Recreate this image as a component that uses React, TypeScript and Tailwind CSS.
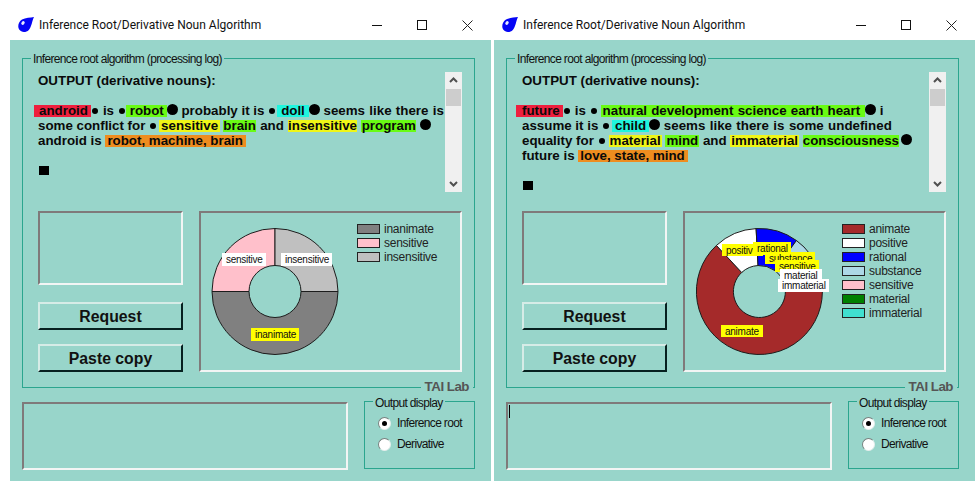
import type { ReactNode } from 'react'

const CLIENT = 'bg-[#98d5ca]'
const sunken = 'border-2 border-t-[#7f7a7a] border-l-[#7f7a7a] border-b-[#f2f5f4] border-r-[#f2f5f4]'

interface Slice {
  from: number
  to: number
  color: string
}

interface ChartLabel {
  text: string
  x: number
  y: number
  w: number
  h: number
  bg: string
}

interface LegendItem {
  name: string
  color: string
}

function point(cx: number, cy: number, r: number, deg: number) {
  const rad = ((deg - 90) * Math.PI) / 180
  return `${(cx + r * Math.cos(rad)).toFixed(2)} ${(cy + r * Math.sin(rad)).toFixed(2)}`
}

function slicePath(cx: number, cy: number, s: Slice) {
  const large = s.to - s.from > 180 ? 1 : 0
  return [
    `M${point(cx, cy, 63, s.from)}`,
    `A63 63 0 ${large} 1 ${point(cx, cy, 63, s.to)}`,
    `L${point(cx, cy, 26, s.to)}`,
    `A26 26 0 ${large} 0 ${point(cx, cy, 26, s.from)}`,
    'Z',
  ].join(' ')
}

function Donut({ cx, slices, labels }: { cx: number; slices: Slice[]; labels: ChartLabel[] }) {
  const cy = 75.5
  return (
    <svg width="150" height="150" className="mt-[3px] ml-[4px] shrink-0">
      {slices.map((s) => (
        <path key={s.from} d={slicePath(cx, cy, s)} fill={s.color} stroke="#1c1c1c" strokeWidth="1" />
      ))}
      {labels.map((l) => (
        <g key={l.text}>
          <rect x={l.x} y={l.y} width={l.w} height={l.h} fill={l.bg} />
          <text
            x={l.x + 4}
            y={l.y + 10}
            fontSize="10"
            letterSpacing="-0.25"
            fontFamily="Liberation Sans, Arial, sans-serif"
            fill="#111"
          >
            {l.text}
          </text>
        </g>
      ))}
    </svg>
  )
}

function Hl({ color, className, children }: { color: string; className?: string; children: ReactNode }) {
  return (
    <span className={`inline-block h-[12px] leading-[12px] ${color} ${className ?? ''}`}>{children}</span>
  )
}

function Dot({ className }: { className?: string }) {
  return <span className={`inline-block w-[6px] h-[6px] rounded-full bg-black align-[1px] ${className ?? ''}`} />
}

const BigDot = () => <span className="inline-block w-[11px] h-[11px] rounded-full bg-black align-[0px]" />
const Square = () => <span className="inline-block w-[10px] h-[9px] bg-black ml-[1px] align-[0px]" />

const RED = 'bg-[#ee1f3e]'
const GREEN = 'bg-[#69fb14]'
const CYAN = 'bg-[#1ff5de]'
const YELLOW = 'bg-[#eff617]'
const ORANGE = 'bg-[#ee8d1f]'

function Line({ children }: { children?: ReactNode }) {
  return <div className="h-[15px] leading-[15px] pl-[4px] whitespace-pre">{children}</div>
}

function AndroidLog() {
  return (
    <>
      <Line>OUTPUT (derivative nouns):</Line>
      <Line />
      <div className="h-[15px] leading-[15px] whitespace-pre">
        <Hl color={RED} className="pl-[5px] pr-[3px]">android</Hl>
        <Dot className="ml-[1px] mr-[5px]" />is <Dot className="ml-[1px] mr-[1px]" />
        <Hl color={GREEN} className="pl-[4px] pr-[3px]">robot</Hl>
        <BigDot /> probably it is <Dot className="ml-[1px] mr-[2px]" />
        <Hl color={CYAN} className="px-[4px]">doll</Hl>
        <BigDot /> <span className="[word-spacing:0.6px]">seems like there is</span>
      </div>
      <Line>
        some conflict for <Dot className="ml-[1px] mr-[3px]" />
        <Hl color={YELLOW} className="px-[2px] -mr-[1px]">sensitive</Hl>{' '}
        <Hl color={GREEN} className="px-[0.5px]">brain</Hl> and{' '}
        <Hl color={YELLOW} className="px-[0.5px]">insensitive</Hl>{' '}
        <Hl color={GREEN} className="px-[0.5px]">program</Hl> <BigDot />
      </Line>
      <Line>
        android is <Hl color={ORANGE} className="pl-[2px] pr-[3px]">robot, machine, brain</Hl>
      </Line>
      <Line />
      <Line>
        <Square />
      </Line>
    </>
  )
}

function FutureLog() {
  return (
    <>
      <Line>OUTPUT (derivative nouns):</Line>
      <Line />
      <div className="h-[15px] leading-[15px] whitespace-pre -ml-[2px]">
        <Hl color={RED} className="pl-[6px] pr-[3px]">future</Hl>
        <Dot className="ml-[1px] mr-[5px]" />is <Dot className="ml-[1px] mr-[4px]" />
        <Hl color={GREEN} className="pl-[2px] pr-[5px] [word-spacing:0.5px]">natural development science earth heart</Hl>
        <BigDot /> i
      </div>
      <Line>
        assume it is <Dot className="ml-[1px] mr-[3px]" />
        <Hl color={CYAN} className="px-[3px]">child</Hl>
        <BigDot /> <span className="[word-spacing:0.7px]">seems like there is some undefined</span>
      </Line>
      <Line>
        equality for <Dot className="ml-[1px] mr-[4px]" />
        <Hl color={YELLOW} className="px-[1px]">material</Hl>{' '}
        <Hl color={GREEN} className="px-[1px]">mind</Hl> and{' '}
        <Hl color={YELLOW} className="px-[1px]">immaterial</Hl>{' '}
        <Hl color={GREEN} className="-mr-[2px]">consciousness</Hl> <BigDot />
      </Line>
      <Line>
        future is <Hl color={ORANGE} className="pl-[2px]">love, state, mind </Hl>
      </Line>
      <Line />
      <Line>
        <Square />
      </Line>
    </>
  )
}

function Scrollbar() {
  return (
    <div className="w-[17px] h-[120px] bg-[#f0f0f0] flex flex-col items-center shrink-0">
      <svg width="17" height="17" viewBox="0 0 17 17">
        <path d="M5 10l3.5-3.5L12 10" fill="none" stroke="#505050" strokeWidth="2" />
      </svg>
      <div className="w-[15px] h-[17px] bg-[#cdcdcd]" />
      <svg width="17" height="17" viewBox="0 0 17 17" className="mt-auto">
        <path d="M5 7l3.5 3.5L12 7" fill="none" stroke="#505050" strokeWidth="2" />
      </svg>
    </div>
  )
}

function TitleBar() {
  return (
    <div className="w-[484px] h-[40px] pt-[10px] pl-[18px] pr-[11px] flex items-center">
      <svg width="16" height="16" viewBox="0 0 16 16" className="shrink-0">
        <path d="M16 0C12.5 0.6 7.5 0.6 4 2.6C0.5 4.8 -0.8 9.5 1.2 12.6C3.4 15.8 8 15.8 10.8 13C13.6 10 14 4 16 0Z" fill="#0505f5" />
        <ellipse cx="5" cy="6" rx="1.5" ry="2" transform="rotate(40 5 6)" fill="#e6e9ff" />
      </svg>
      <span className="ml-[5px] text-[12px] text-[#111] font-['Roboto',sans-serif]">
        Inference Root/Derivative Noun Algorithm
      </span>
      <div className="ml-auto flex items-center gap-[35px]">
        <svg width="10" height="10" viewBox="0 0 10 10">
          <path d="M0 5.5H10" stroke="#111" strokeWidth="1" />
        </svg>
        <svg width="10" height="10" viewBox="0 0 10 10">
          <rect x="0.5" y="0.5" width="9" height="9" fill="none" stroke="#111" />
        </svg>
        <svg width="11" height="11" viewBox="0 0 11 11">
          <path d="M0.5 0.5L10.5 10.5M10.5 0.5L0.5 10.5" stroke="#222" strokeWidth="1" />
        </svg>
      </div>
    </div>
  )
}

function Button({ children }: { children: ReactNode }) {
  return (
    <div className="h-[28px] pt-[1px] flex items-center justify-center border-2 border-t-[#d6ece7] border-l-[#d6ece7] border-b-[#06201f] border-r-[#06201f] font-bold text-[15.8px] text-[#111]">
      {children}
    </div>
  )
}

function Radio({ checked, children }: { checked?: boolean; children: ReactNode }) {
  return (
    <div className="flex items-center h-[14px] gap-[6px]">
      <span className="w-[13px] h-[13px] rounded-full bg-white border border-t-[#77807e] border-l-[#77807e] border-r-[#e4eeec] border-b-[#e4eeec] flex items-center justify-center">
        {checked && <span className="w-[5px] h-[5px] rounded-full bg-black" />}
      </span>
      <span>{children}</span>
    </div>
  )
}

function Window({
  log,
  slices,
  labels,
  legend,
  cx,
  legendOffset,
  caret,
}: {
  log: ReactNode
  slices: Slice[]
  labels: ChartLabel[]
  legend: LegendItem[]
  cx: number
  legendOffset: string
  caret?: boolean
}) {
  return (
    <div className="shrink-0">
      <TitleBar />
      <div className={`ml-[10px] w-[481px] h-[441px] pt-[18px] px-[12px] text-[12px] tracking-[-0.65px] text-[#111] ${CLIENT}`}>
        <div className="relative w-[453px] h-[330px] border border-[#2ba58e] pt-[13px] pl-[11px]">
          <span className={`absolute -top-[7px] left-[8px] px-[2px] leading-[14px] ${CLIENT}`}>
            Inference root algorithm (processing log)
          </span>
          <div className="flex">
            <div className="w-[411px] h-[120px] pt-[1px] font-bold text-[13.33px] tracking-normal text-[#0a0a0a]">{log}</div>
            <Scrollbar />
          </div>
          <div className="flex mt-[19px] pl-[4px]">
            <div className="w-[145px] flex flex-col tracking-normal">
              <div className={`h-[74px] mb-[17px] ${sunken}`} />
              <Button>Request</Button>
              <div className="h-[14px]" />
              <Button>Paste copy</Button>
            </div>
            <div className={`ml-[16px] w-[263px] h-[161px] flex ${sunken}`}>
              <Donut cx={cx} slices={slices} labels={labels} />
              <div className={`mt-[9px] ${legendOffset}`}>
                {legend.map((item) => (
                  <div key={item.name} className="flex items-center h-[14px] gap-[4px] tracking-[-0.25px] text-[#222]">
                    <span className={`w-[23px] h-[10px] border border-[#222] ${item.color}`} />
                    {item.name}
                  </div>
                ))}
              </div>
            </div>
          </div>
          <span className={`absolute right-[1px] -bottom-[7px] px-[4px] font-bold text-[13.33px] tracking-[-0.5px] leading-[14px] text-[#555] ${CLIENT}`}>
            TAI Lab
          </span>
        </div>
        <div className="flex mt-[13px]">
          <div className={`w-[326px] h-[68px] mt-[1px] pl-[1px] pt-[1px] ${sunken}`}>
            {caret && <div className="w-px h-[13px] bg-black" />}
          </div>
          <div className="relative ml-[16px] w-[111px] h-[68px] border border-[#2ba58e] pt-[14px] pl-[13px] flex flex-col gap-[7px]">
            <span className={`absolute -top-[6px] left-[8px] px-[2px] leading-[14px] ${CLIENT}`}>Output display</span>
            <Radio checked>Inference root</Radio>
            <Radio>Derivative</Radio>
          </div>
        </div>
      </div>
    </div>
  )
}

const androidSlices: Slice[] = [
  { from: 90, to: 270, color: '#808080' },
  { from: 270, to: 360, color: '#ffc0cb' },
  { from: 0, to: 90, color: '#c0c0c0' },
]

const androidLabels: ChartLabel[] = [
  { text: 'sensitive', x: 17, y: 37, w: 44, h: 13, bg: '#ffffff' },
  { text: 'insensitive', x: 76, y: 37, w: 51, h: 13, bg: '#ffffff' },
  { text: 'inanimate', x: 46, y: 112, w: 48, h: 13, bg: '#ffff00' },
]

const androidLegend: LegendItem[] = [
  { name: 'inanimate', color: 'bg-[#808080]' },
  { name: 'sensitive', color: 'bg-[#ffc0cb]' },
  { name: 'insensitive', color: 'bg-[#c0c0c0]' },
]

const futureSlices: Slice[] = [
  { from: 90, to: 317, color: '#a52a2a' },
  { from: 317, to: 357, color: '#ffffff' },
  { from: -3, to: 36, color: '#0000ff' },
  { from: 36, to: 54, color: '#add8e6' },
  { from: 54, to: 66, color: '#ffc0cb' },
  { from: 66, to: 78, color: '#008000' },
  { from: 78, to: 90, color: '#40e0d0' },
]

const futureLabels: ChartLabel[] = [
  { text: 'animate', x: 32, y: 109, w: 42, h: 12, bg: '#ffff00' },
  { text: 'positive', x: 33, y: 28, w: 41, h: 12, bg: '#ffff00' },
  { text: 'rational', x: 64, y: 26, w: 38, h: 13, bg: '#ffff00' },
  { text: 'substance', x: 76, y: 36, w: 50, h: 12, bg: '#ffff00' },
  { text: 'sensitive', x: 86, y: 44, w: 44, h: 12, bg: '#ffff00' },
  { text: 'material', x: 91, y: 53, w: 42, h: 12, bg: '#ffffff' },
  { text: 'immaterial', x: 89, y: 63, w: 51, h: 13, bg: '#ffffff' },
]

const futureLegend: LegendItem[] = [
  { name: 'animate', color: 'bg-[#a52a2a]' },
  { name: 'positive', color: 'bg-[#ffffff]' },
  { name: 'rational', color: 'bg-[#0000ff]' },
  { name: 'substance', color: 'bg-[#add8e6]' },
  { name: 'sensitive', color: 'bg-[#ffc0cb]' },
  { name: 'material', color: 'bg-[#008000]' },
  { name: 'immaterial', color: 'bg-[#40e0d0]' },
]

export default function App() {
  return (
    <div className="w-[979px] h-[493px] bg-white flex overflow-hidden font-['Liberation_Sans',Arial,sans-serif]">
      <div className="w-[484px] shrink-0">
        <Window
          log={<AndroidLog />}
          slices={androidSlices}
          labels={androidLabels}
          legend={androidLegend}
          cx={70}
          legendOffset="ml-[2px]"
        />
      </div>
      <Window
        log={<FutureLog />}
        slices={futureSlices}
        labels={futureLabels}
        legend={futureLegend}
        cx={70.4}
        legendOffset="ml-[3px]"
        caret
      />
    </div>
  )
}
